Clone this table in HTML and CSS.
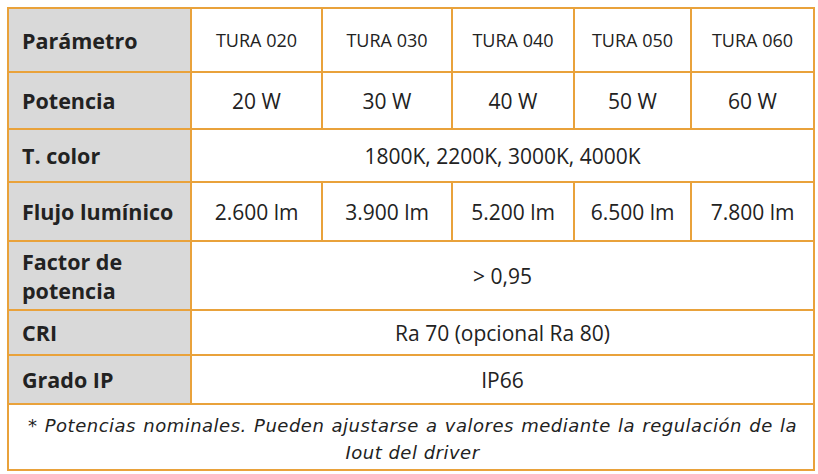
FILE: index.html
```html
<!DOCTYPE html>
<html lang="es">
<head>
<meta charset="utf-8">
<link rel="stylesheet" href="styles.css">
</head>
<body>
<table class="spec">
  <colgroup>
    <col class="c-param">
    <col class="c1">
    <col class="c2">
    <col class="c3">
    <col class="c4">
    <col class="c5">
  </colgroup>
  <tr class="r1">
    <th>Parámetro</th>
    <td class="model">TURA 020</td>
    <td class="model">TURA 030</td>
    <td class="model">TURA 040</td>
    <td class="model">TURA 050</td>
    <td class="model">TURA 060</td>
  </tr>
  <tr class="r2">
    <th>Potencia</th>
    <td>20 W</td>
    <td>30 W</td>
    <td>40 W</td>
    <td>50 W</td>
    <td>60 W</td>
  </tr>
  <tr class="r3">
    <th>T. color</th>
    <td colspan="5">1800K, 2200K, 3000K, 4000K</td>
  </tr>
  <tr class="r4">
    <th>Flujo lumínico</th>
    <td>2.600 lm</td>
    <td>3.900 lm</td>
    <td>5.200 lm</td>
    <td>6.500 lm</td>
    <td>7.800 lm</td>
  </tr>
  <tr class="r5">
    <th>Factor de<br>potencia</th>
    <td colspan="5">&gt; 0,95</td>
  </tr>
  <tr class="r6">
    <th>CRI</th>
    <td colspan="5">Ra 70 (opcional Ra 80)</td>
  </tr>
  <tr class="r7">
    <th>Grado IP</th>
    <td colspan="5">IP66</td>
  </tr>
  <tr class="r8">
    <td colspan="6" class="note">* Potencias nominales. Pueden ajustarse a valores mediante la regulación de la Iout del driver</td>
  </tr>
</table>
</body>
</html>
```
FILE: styles.css
```css
html, body {
  margin: 0;
  padding: 0;
  background: #ffffff;
}
body {
  padding: 7px 0 0 7px;
}
.spec {
  border-collapse: collapse;
  table-layout: fixed;
  width: 806px;
  font-family: "Open Sans", "DejaVu Sans", sans-serif;
  color: #222222;
}
.c-param { width: 183px; }
.c1 { width: 131px; }
.c2 { width: 130px; }
.c3 { width: 122px; }
.c4 { width: 117px; }
.c5 { width: 123px; }
.spec th,
.spec td {
  border: 2px solid #e9a23b;
  padding: 0;
}
.spec th {
  background: #d9d9d9;
  text-align: left;
  font-weight: 700;
  font-size: 21.5px;
  line-height: 29px;
  padding-left: 13px;
}
.spec td {
  text-align: center;
  font-size: 21px;
  font-weight: 400;
}
.spec td.model {
  font-size: 18px;
}
.r1 { height: 64px; }
.r2 { height: 57px; }
.r3 { height: 53px; }
.r4 { height: 59px; }
.r5 { height: 69px; }
.r6 { height: 45px; }
.r7 { height: 49px; }
.r8 { height: 66px; }
.spec td.note {
  font-family: "DejaVu Sans", sans-serif;
  font-style: oblique;
  font-size: 18px;
  line-height: 27px;
  padding: 6px 16px 2px 19px;
  text-align: justify;
  text-align-last: center;
  letter-spacing: 0.5px;
}
```
